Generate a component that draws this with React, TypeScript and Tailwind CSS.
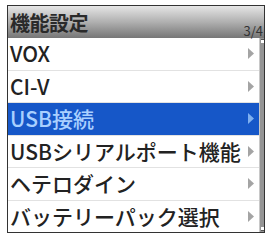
import React from 'react';

const items = [
  { label: 'VOX' },
  { label: 'CI-V' },
  { label: 'USB接続', active: true },
  { label: 'USBシリアルポート機能' },
  { label: 'ヘテロダイン' },
  { label: 'バッテリーパック選択' },
];

const Arrow: React.FC<{ active?: boolean }> = ({ active }) => (
  <svg width="6" height="11" viewBox="0 0 6 11" className="shrink-0">
    <path d="M0 0 L6 5.5 L0 11 Z" fill={active ? '#7fb0f0' : '#a4a4a4'} />
  </svg>
);

export default function App() {
  return (
    <div className="w-[270px] h-[237px] bg-white pt-[5px] pl-[7px]" style={{ fontFamily: '"Noto Sans CJK JP", "Noto Sans", sans-serif' }}>
      <div className="w-[258px] h-[228px] border border-[#333] flex flex-col">
        {/* header */}
        <div className="h-[32px] shrink-0 bg-gradient-to-b from-[#e6e6e6] via-[#b0b0b0] to-[#767676] flex items-end justify-between pl-[2px] pr-[1px]">
          <span className="text-[20px] leading-[29px] font-bold text-[#2a2a2a] tracking-[-0.5px] self-center">機能設定</span>
          <span className="text-[13px] leading-[14px] text-[#333]">3/4</span>
        </div>
        {/* list + scrollbar */}
        <div className="flex-1 flex">
          <div className="flex-1 flex flex-col">
            {items.map((it, i) => (
              <div
                key={i}
                className={`flex-1 flex items-center ${i < items.length - 1 ? 'border-b border-[#e2e2e2]' : ''}`}
              >
                <div
                  className={`w-full h-full flex items-center justify-between pl-[2px] pr-[5px] ${it.active ? 'bg-[#1657c8] h-[28px]' : ''}`}
                >
                  <span
                    className={`text-[21px] leading-none font-medium whitespace-nowrap ${it.active ? 'text-[#a9d0ff]' : 'text-[#222]'}`}
                  >
                    {it.label}
                  </span>
                  <Arrow active={it.active} />
                </div>
              </div>
            ))}
          </div>
          <div className="w-[5px] bg-[#959595] border-l border-[#c8c8c8] flex flex-col justify-between items-center py-[1px]">
            <div className="w-[3px] h-[4px] bg-white border-t border-[#555]" />
            <div className="w-[3px] h-[4px] bg-white border-b border-[#555]" />
          </div>
        </div>
      </div>
    </div>
  );
}
